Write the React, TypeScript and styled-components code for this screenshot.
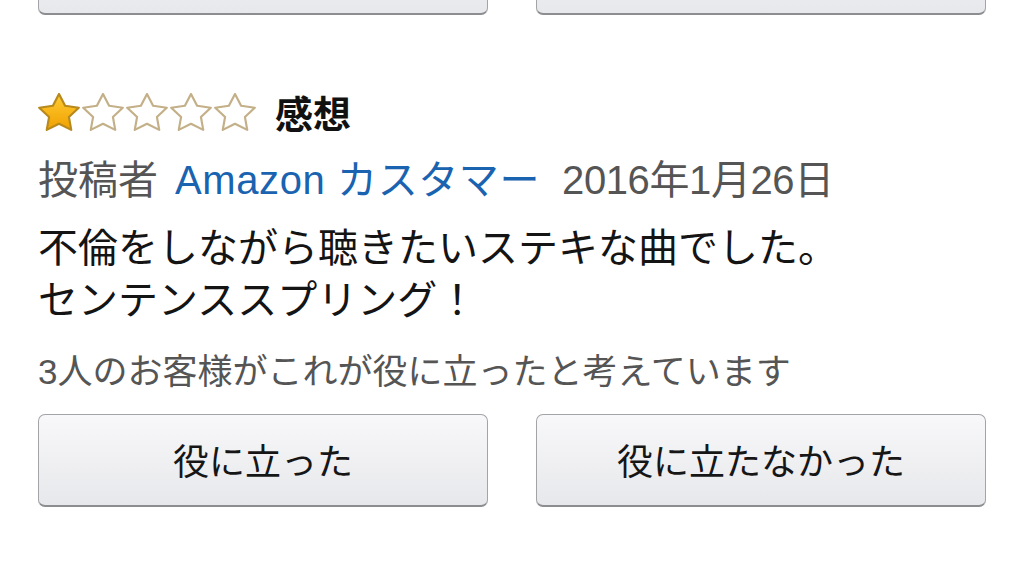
import React from "react";
import styled, { createGlobalStyle } from "styled-components";

const Global = createGlobalStyle`
  html, body { margin: 0; padding: 0; background: #ffffff; }
  body {
    font-family: "Liberation Sans", "Noto Sans CJK JP", sans-serif;
    color: #111111;
    -webkit-font-smoothing: antialiased;
  }
`;

const Page = styled.div`
  width: 1024px;
  height: 574px;
  overflow: hidden;
  padding: 0 38px;
  box-sizing: border-box;
  display: flex;
  flex-direction: column;
`;

const ButtonRow = styled.div<{ $stub?: boolean }>`
  display: flex;
  gap: 48px;
  align-items: flex-end;
  height: ${(p) => (p.$stub ? "15px" : "93px")};
  flex-shrink: 0;
  overflow: hidden;
  margin-top: ${(p) => (p.$stub ? "0" : "20px")};
`;

const VoteButton = styled.button`
  flex: 1 1 0;
  height: 93px;
  flex-shrink: 0;
  box-sizing: border-box;
  border: 1px solid #a3a4a7;
  border-bottom: 2px solid #8c8d90;
  border-radius: 7px;
  background: linear-gradient(#f8f8fa, #e7e8eb);
  font-family: "Liberation Sans", "Noto Sans CJK JP", sans-serif;
  font-size: 36px;
  color: #161616;
  padding: 0 0 2px;
  display: flex;
  align-items: center;
  justify-content: center;
`;

const RatingRow = styled.div`
  display: flex;
  align-items: center;
  height: 40px;
  margin-top: 77px;
`;

const Stars = styled.div`
  display: flex;
  gap: 2px;
  margin-right: 19px;
`;

const Title = styled.span`
  font-family: "Noto Sans CJK JP", sans-serif;
  font-weight: 700;
  font-size: 38px;
  line-height: 40px;
  color: #111;
`;

const Byline = styled.div`
  display: flex;
  align-items: center;
  height: 48px;
  margin-top: 24px;
  font-size: 40px;
  line-height: 48px;
  white-space: nowrap;
`;

const Muted = styled.span<{ $gap?: number; $tight?: boolean }>`
  color: #555555;
  margin-right: ${(p) => p.$gap ?? 0}px;
  letter-spacing: ${(p) => (p.$tight ? "-0.4px" : "0")};
`;

const AuthorLink = styled.span`
  color: #1a63b0;
  letter-spacing: 0.6px;
  margin-right: 22px;
`;

const Body = styled.p`
  margin: 18px 0 0;
  font-size: 40px;
  line-height: 52px;
  color: #141414;
`;

const Helpful = styled.div`
  margin-top: 24px;
  font-size: 35px;
  line-height: 44px;
  color: #555555;
  white-space: nowrap;
`;

const StarPoints =
  "12,2 15.09,8.26 22,9.27 17,14.14 18.18,21.02 12,17.77 5.82,21.02 7,14.14 2,9.27 8.91,8.26";

function Star({ filled }: { filled: boolean }) {
  return (
    <svg width="42" height="38" viewBox="1.4 1.5 21.2 20.1" preserveAspectRatio="none">
      <defs>
        <linearGradient id="gold" x1="0" y1="0" x2="0" y2="1">
          <stop offset="0" stopColor="#ffcc33" />
          <stop offset="1" stopColor="#f0a000" />
        </linearGradient>
      </defs>
      <polygon
        points={StarPoints}
        fill={filled ? "url(#gold)" : "#ffffff"}
        stroke={filled ? "#b88a1e" : "#c4b088"}
        strokeWidth="1.1"
        strokeLinejoin="round"
      />
    </svg>
  );
}

export default function App() {
  return (
    <>
      <Global />
      <Page>
        <ButtonRow $stub aria-hidden="true">
          <VoteButton tabIndex={-1} />
          <VoteButton tabIndex={-1} />
        </ButtonRow>
        <RatingRow>
          <Stars>
            {[0, 1, 2, 3, 4].map((i) => (
              <Star key={i} filled={i < 1} />
            ))}
          </Stars>
          <Title>感想</Title>
        </RatingRow>
        <Byline>
          <Muted $gap={17}>投稿者</Muted>
          <AuthorLink>Amazon カスタマー</AuthorLink>
          <Muted $tight>2016年1月26日</Muted>
        </Byline>
        <Body>
          不倫をしながら聴きたいステキな曲でした。
          <br />
          センテンススプリング！
        </Body>
        <Helpful>3人のお客様がこれが役に立ったと考えています</Helpful>
        <ButtonRow>
          <VoteButton>役に立った</VoteButton>
          <VoteButton>役に立たなかった</VoteButton>
        </ButtonRow>
      </Page>
    </>
  );
}
